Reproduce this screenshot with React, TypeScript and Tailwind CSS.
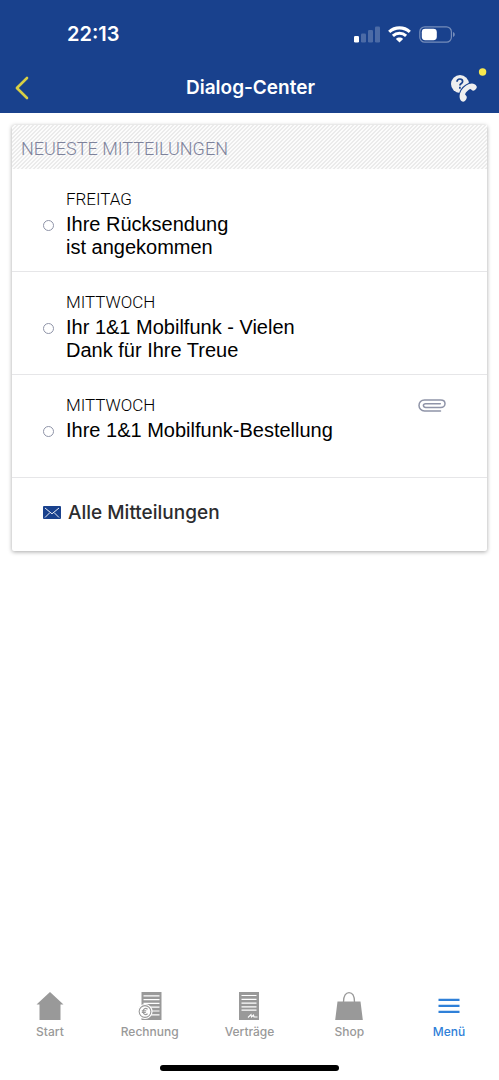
import type { ReactNode } from "react"
import clsx from "clsx"

type Message = {
  day: string
  title: string[]
  attachment?: boolean
}

const messages: Message[] = [
  { day: "FREITAG", title: ["Ihre Rücksendung", "ist angekommen"] },
  { day: "MITTWOCH", title: ["Ihr 1&1 Mobilfunk - Vielen", "Dank für Ihre Treue"] },
  { day: "MITTWOCH", title: ["Ihre 1&1 Mobilfunk-Bestellung"], attachment: true },
]

function StatusBar() {
  return (
    <div className="flex h-[62px] items-center justify-between pt-1.5 pr-[43px] pl-[67px]">
      <span className="font-['Inter',sans-serif] text-[20px] leading-6 font-semibold">22:13</span>
      <div className="flex items-center gap-2">
        <svg width="26" height="17" viewBox="0 0 26 17" fill="currentColor" aria-hidden="true">
          <rect x="0" y="10" width="5" height="6.5" rx="1.3" />
          <g opacity="0.22">
            <rect x="7" y="7.5" width="5" height="9" rx="1.3" />
            <rect x="14" y="4" width="5" height="12.5" rx="1.3" />
            <rect x="21" y="0.5" width="5" height="16" rx="1.3" />
          </g>
        </svg>
        <svg width="23" height="17" viewBox="0 0 23 17" fill="none" stroke="currentColor" aria-hidden="true">
          <path d="M1.2 5.9C7 .5 16 .5 21.8 5.9" strokeWidth="3.2" />
          <path d="M4.9 9.8c3.7-3.5 9.5-3.5 13.2 0" strokeWidth="3" />
          <path d="M7.9 12.9c2-1.8 5.2-1.8 7.2 0l-3.6 3.7z" fill="currentColor" stroke="none" />
        </svg>
        <svg width="37" height="17" viewBox="0 0 37 17" aria-hidden="true">
          <rect x="0.8" y="0.8" width="31.6" height="15.4" rx="5" fill="none" stroke="#fff" strokeWidth="1.2" opacity="0.4" />
          <rect x="2.8" y="2.8" width="15" height="11.4" rx="3.4" fill="#fff" />
          <path d="M34.2 6v5c1.9-.8 1.9-4.2 0-5z" fill="#fff" opacity="0.5" />
        </svg>
      </div>
    </div>
  )
}

function Header() {
  return (
    <header className="bg-[#19418d] text-white">
      <StatusBar />
      <div className="grid h-[51px] grid-cols-[1fr_auto_1fr] items-center pr-3 pl-3.5">
        <button type="button" aria-label="Zurück" className="justify-self-start">
          <svg width="16" height="24" viewBox="0 0 16 24" fill="none" stroke="#d8cf45" strokeWidth="2.6" strokeLinecap="round" strokeLinejoin="round">
            <path d="M13 2 2.9 12 13 22" />
          </svg>
        </button>
        <h1 className="font-['Inter',sans-serif] text-[19px] leading-6 font-semibold">Dialog-Center</h1>
        <button type="button" aria-label="Hilfe und Kontakt" className="justify-self-end">
          <svg width="38" height="36" viewBox="0 0 38 36" className="overflow-visible">
            <circle cx="11" cy="14" r="9" fill="#efefef" />
            <path
              d="M11 23.5C12.5 19 16 15.500 20 14 23 13 26 13.200 27.700 16.500 28.300 18 26 20.500 24.300 20.700 23 20.500 22.500 19.300 21 19 19 20 17 22 16 24.200 16.500 25.500 18 26 17.800 27.500 17.500 29.500 16 31.500 14.300 31.700 11.500 31.500 9.800 28 11 23.500z"
              fill="#efefef"
              stroke="#19418d"
              strokeWidth="2"
              paintOrder="stroke"
            />
            <path d="M8 11.700c.1-1.800 1.300-2.700 2.900-2.700s2.700.9 2.700 2.400c0 2.200-2.700 2-2.700 4.200M10.900 16.800v1.900" fill="none" stroke="#19418d" strokeWidth="1.7" />
            <circle cx="33.6" cy="2" r="3.7" fill="#f8e84e" />
          </svg>
        </button>
      </div>
    </header>
  )
}

function PaperclipIcon() {
  return (
    <svg width="28" height="13" viewBox="0 0 28 13" fill="none" stroke="#8f94a8" strokeWidth="1.5" strokeLinecap="round" role="img" aria-label="Anhang">
      <path d="M22.5 12H6.5C3.2 12 1 9.4 1 6.6 1 3.4 3.2 1 6.5 1h16.2c2.5 0 4.3 1.6 4.3 3.7s-1.8 3.7-4.2 3.7H7.7C6.3 8.4 5.4 7.7 5.4 6.6S6.3 4.8 7.7 4.8h14.6" />
    </svg>
  )
}

function MessageRow({ message }: { message: Message }) {
  return (
    <li className="border-b border-[#e6e6e8]">
      <a href="#mitteilung" className="grid min-h-[102px] grid-cols-[11px_1fr_auto] content-start gap-x-3 pt-[18px] pr-[41px] pb-3 pl-[31px]">
        <span className="col-start-2 mb-0.5 font-['Roboto',sans-serif] text-[17px] leading-6 font-light">{message.day}</span>
        <span className="flex items-center pb-0.5">{message.attachment && <PaperclipIcon />}</span>
        <span className="mt-[7px] size-[11px] rounded-full border border-[#8f94a8]" />
        <span className="col-span-2 text-[20px] leading-[23px]">
          {message.title.map((line) => (
            <span key={line} className="block">{line}</span>
          ))}
        </span>
      </a>
    </li>
  )
}

function Tab({ label, active, children }: { label: string; active?: boolean; children: ReactNode }) {
  return (
    <a
      href={"#" + label.toLowerCase()}
      aria-current={active ? "page" : undefined}
      className={clsx("flex flex-1 flex-col items-center gap-[3px]", active ? "text-[#2f80d8]" : "text-[#999999]")}>
      <svg width="30" height="30" viewBox="0 0 30 30" fill="currentColor" aria-hidden="true">
        {children}
      </svg>
      <span className="font-['Inter',sans-serif] text-[12px] leading-4 font-medium">{label}</span>
    </a>
  )
}

function TabBar() {
  return (
    <nav className="flex">
      <Tab label="Start">
        <path d="M15 1 28.5 13.5H25.5V29H4.5V13.5H1.5z" />
      </Tab>
      <Tab label="Rechnung">
        <path d="M6.5 1h20v28h-20z" />
        <path d="M8.5 4.8h16M8.5 8.6h16M8.5 12.4h16M8.5 16.2h16M15 20h9.5M15 23.8h9.5" stroke="#fff" strokeWidth="1.2" />
        <circle cx="10" cy="20.5" r="7" stroke="#fff" strokeWidth="1.2" />
        <circle cx="10" cy="20.5" r="5.3" fill="#fff" />
        <path d="M12.6 18.2c-2.3-1.8-4.5-.3-4.5 2.3s2.2 4.1 4.5 2.3M6.8 19.7h4.5M6.8 21.4h4" fill="none" stroke="currentColor" strokeWidth="1.1" />
      </Tab>
      <Tab label="Verträge">
        <path d="M5 1h20v28H5z" />
        <path d="M7.5 4.5h15M7.5 8.3h15M7.5 12.1h15M7.5 15.9h15M7.5 19.2h15" stroke="#fff" strokeWidth="1.2" />
        <path d="m14 26.5 3-3 .5 2.5 2-2 .5 2h3.5" fill="none" stroke="#fff" strokeWidth="1.1" />
      </Tab>
      <Tab label="Shop">
        <path d="M3.5 10.5h23L28.800 29H1.2z" />
        <path d="M9.5 11C9.5 4.5 12 1.6 15 1.6S20.5 4.5 20.5 11" fill="none" stroke="currentColor" strokeWidth="1.3" />
      </Tab>
      <Tab label="Menü" active>
        <path d="M4.5 7.8h21v2.3h-21zM4.5 13.8h21v2.3h-21zM4.5 19.8h21v2.3h-21z" />
      </Tab>
    </nav>
  )
}

export default function App() {
  return (
    <div className="flex min-h-screen flex-col bg-white font-['Liberation_Sans',Arial,sans-serif] text-black">
      <Header />
      <main className="flex-1 px-3 pt-3">
        <section className="rounded-xs bg-white shadow-[0_1px_4px_rgba(0,0,0,0.35)]">
          <h2 className="bg-[linear-gradient(135deg,#ebebeb_25%,#fcfcfc_25%,#fcfcfc_50%,#ebebeb_50%,#ebebeb_75%,#fcfcfc_75%)] bg-[length:4px_4px] pt-3 pb-2 pl-[9px] font-['Roboto',sans-serif] text-[18px] leading-6 font-light text-[#7d829b]">
            NEUESTE MITTEILUNGEN
          </h2>
          <ul>
            {messages.map((message) => (
              <MessageRow key={message.title[0]} message={message} />
            ))}
          </ul>
          <a href="#alle" className="flex h-[73px] items-center gap-[7px] pr-4 pb-1 pl-[31px] font-['Inter',sans-serif] text-[19px] leading-6 font-medium text-[#2c2c2e]">
            <svg width="18" height="14" viewBox="0 0 18 14" aria-hidden="true">
              <rect width="18" height="13" rx="1" fill="#19418d" />
              <path d="m2 2 7 5.8L16 2M2 11.5l4.8-4.8M16 11.5l-4.8-4.8" fill="none" stroke="#fff" strokeWidth="0.9" />
            </svg>
            Alle Mitteilungen
          </a>
        </section>
      </main>
      <footer className="flex flex-col gap-[25px] pb-[9px]">
        <TabBar />
        <div className="h-1.5 w-[179px] self-center rounded-full bg-black" />
      </footer>
    </div>
  )
}
